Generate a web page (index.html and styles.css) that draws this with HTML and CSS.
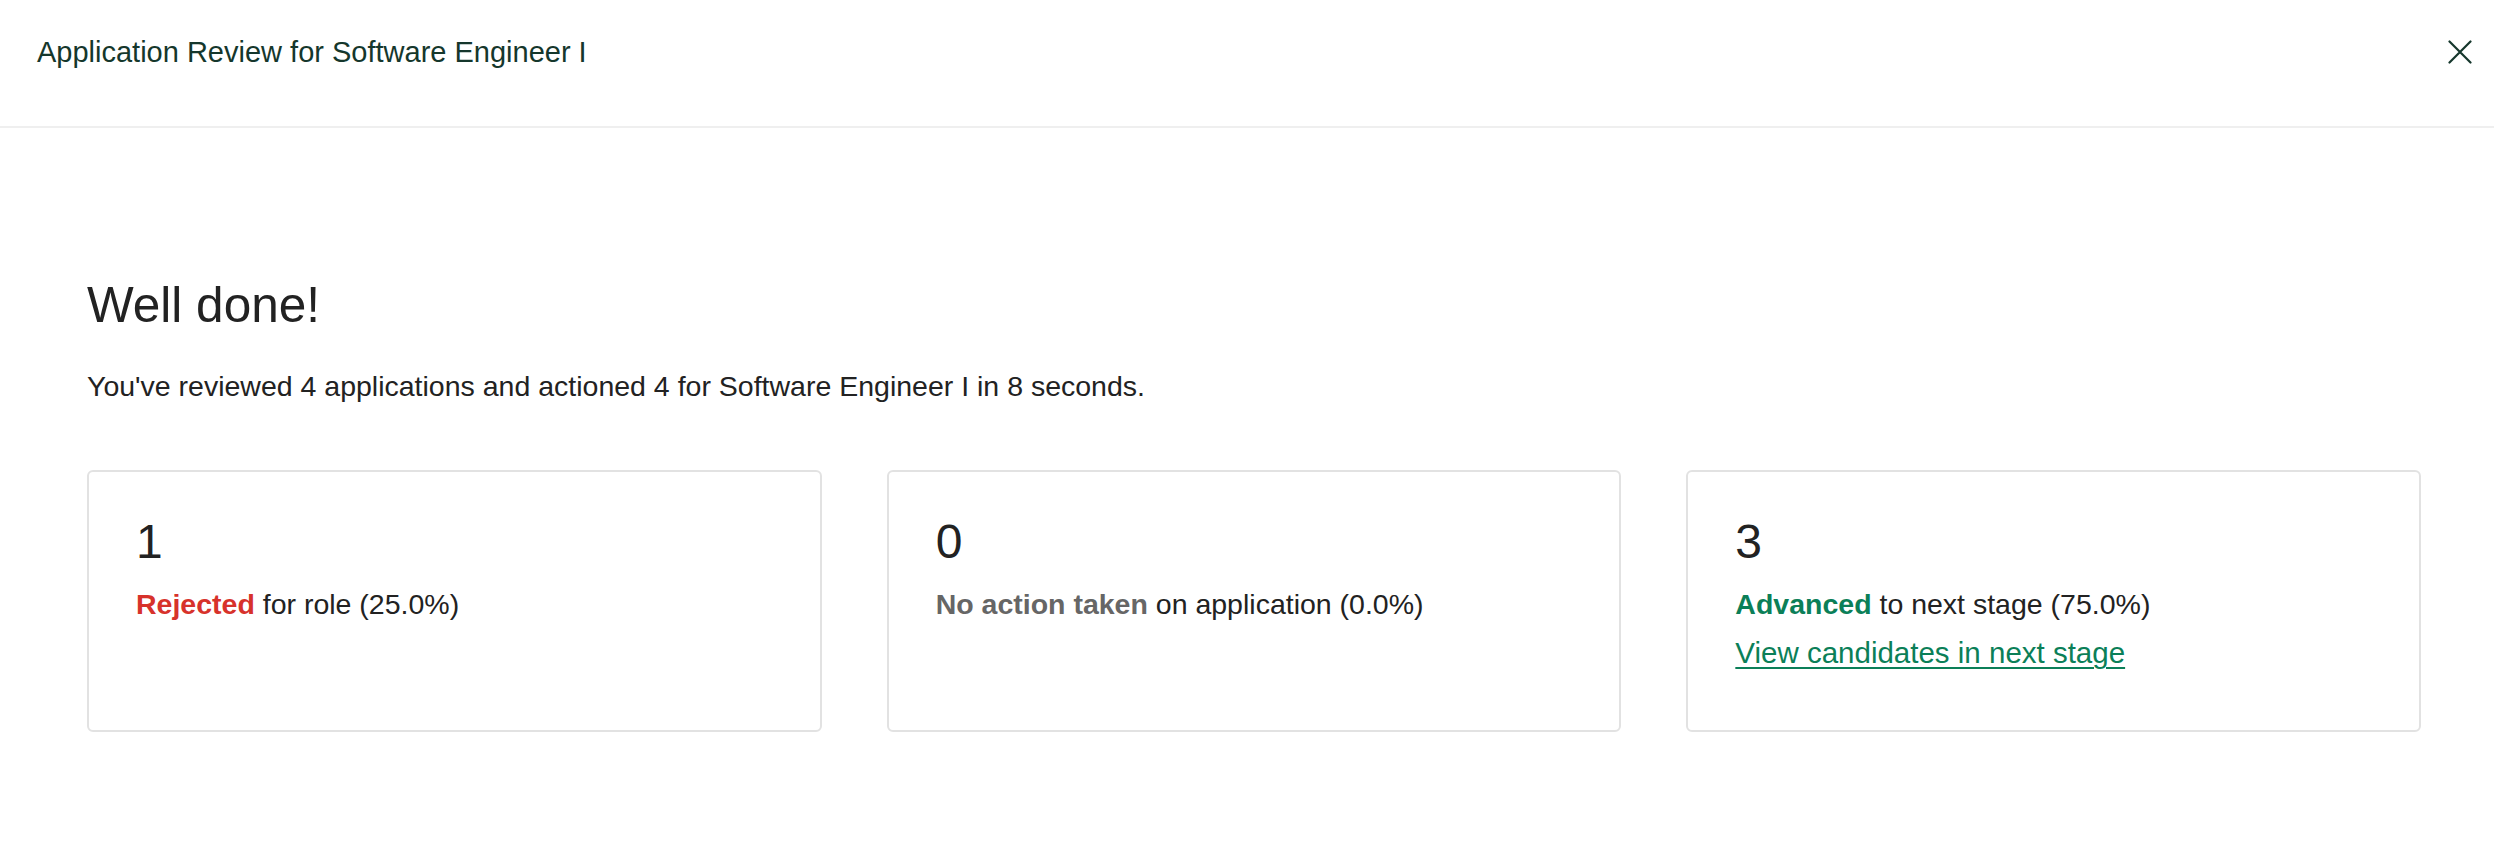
FILE: index.html
```html
<!DOCTYPE html>
<html lang="en">
<head>
    <meta charset="UTF-8">
    <meta name="viewport" content="width=device-width, initial-scale=1.0">
    <title>Application Review</title>
    <link rel="stylesheet" href="styles.css">
</head>
<body>
    <header class="review-header">
        <span class="review-title">Application Review for Software Engineer I</span>
        <button class="close-btn" aria-label="Close">
            <svg width="24" height="24" viewBox="0 0 24 24" fill="none" stroke="#15372c" stroke-width="2.2" stroke-linecap="round">
                <path d="M1.5 1.5 L22.5 22.5 M22.5 1.5 L1.5 22.5"/>
            </svg>
        </button>
    </header>

    <main class="summary">
        <h1>Well done!</h1>
        <p class="summary-text">You've reviewed 4 applications and actioned 4 for Software Engineer I in 8 seconds.</p>

        <div class="cards">
            <div class="card">
                <div class="count">1</div>
                <p class="label"><strong class="rejected">Rejected</strong> for role (25.0%)</p>
            </div>
            <div class="card">
                <div class="count">0</div>
                <p class="label"><strong class="none">No action taken</strong> on application (0.0%)</p>
            </div>
            <div class="card">
                <div class="count">3</div>
                <p class="label"><strong class="advanced">Advanced</strong> to next stage (75.0%)</p>
                <a class="next-link" href="#">View candidates in next stage</a>
            </div>
        </div>
    </main>
</body>
</html>
```

FILE: styles.css
```css
body {
    margin: 0;
    padding: 0;
    background: #ffffff;
    color: #222222;
    font-family: "Liberation Sans", Arial, sans-serif;
}

/* Header */
.review-header {
    display: flex;
    align-items: center;
    justify-content: space-between;
    height: 128px;
    box-sizing: border-box;
    padding: 0 22px 22px 37px;
    border-bottom: 2px solid #efefef;
}

.review-title {
    color: #15372c;
    font-size: 29px;
}

.close-btn {
    background: none;
    border: none;
    padding: 0;
    width: 24px;
    height: 24px;
    cursor: pointer;
}

.close-btn svg {
    display: block;
}

/* Summary */
.summary {
    padding: 147px 73px 0 87px;
}

h1 {
    margin: 0;
    font-size: 49.5px;
    font-weight: normal;
    line-height: 1.2;
    color: #222222;
}

.summary-text {
    margin: 31px 0 0;
    font-size: 28.5px;
    line-height: 1.5;
}

.cards {
    display: grid;
    grid-template-columns: repeat(3, 1fr);
    gap: 65px;
    margin-top: 62px;
}

.card {
    height: 262px;
    box-sizing: border-box;
    border: 2px solid #e2e2e2;
    border-radius: 6px;
    padding: 41px 47px;
}

.count {
    font-size: 48px;
    line-height: 1.2;
}

.label {
    margin: 12px 0 0;
    font-size: 28.5px;
    line-height: 1.5;
}

.rejected {
    color: #d7322b;
}

.none {
    color: #666666;
}

.advanced {
    color: #0b7f58;
}

.next-link {
    display: inline-block;
    margin-top: 6px;
    font-size: 29.5px;
    line-height: 1.5;
    color: #0b7f58;
    text-decoration: underline;
    text-underline-offset: 4px;
    text-decoration-thickness: 2px;
}
```
